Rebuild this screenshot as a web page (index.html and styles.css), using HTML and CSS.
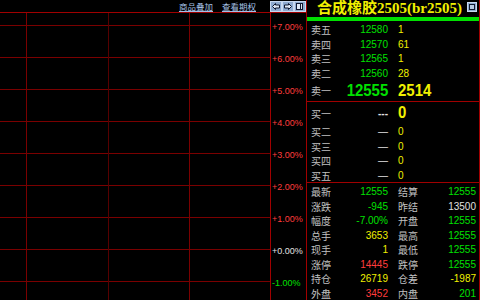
FILE: index.html
```html
<!DOCTYPE html>
<html>
<head>
<meta charset="utf-8">
<link rel="stylesheet" href="styles.css">
</head>
<body>
<div class="app">
  <div class="left">
    <div class="toolbar">
      <a class="link">商品叠加</a>
      <a class="link">查看期权</a>
      <svg class="btns" width="36" height="11" viewBox="0 0 36 11">
        <rect x="0.5" y="0.5" width="11" height="10" fill="#8eaad0" stroke="#c8d8f0"/>
        <path d="M2.5 5.5 L5.5 2.5 L5.5 4 L9.5 4 L9.5 7 L5.5 7 L5.5 8.5 Z" fill="#dfe8f6" stroke="#101830" stroke-width="1"/>
        <rect x="12.5" y="0.5" width="11" height="10" fill="#8eaad0" stroke="#c8d8f0"/>
        <path d="M21.5 5.5 L18.5 2.5 L18.5 4 L14.5 4 L14.5 7 L18.5 7 L18.5 8.5 Z" fill="#dfe8f6" stroke="#101830" stroke-width="1"/>
        <rect x="24.5" y="0.5" width="11" height="10" fill="#8eaad0" stroke="#c8d8f0"/>
        <rect x="26.5" y="2.5" width="6" height="6" fill="#dfe8f6" stroke="#101830"/>
        <line x1="30.5" y1="2" x2="30.5" y2="9" stroke="#101830"/>
      </svg>
    </div>
    <div class="chart">
      <div class="plot"></div>
      <div class="axis">
        <div class="lbl up">+7.00%</div>
        <div class="lbl up">+6.00%</div>
        <div class="lbl up">+5.00%</div>
        <div class="lbl up">+4.00%</div>
        <div class="lbl up">+3.00%</div>
        <div class="lbl up">+2.00%</div>
        <div class="lbl up">+1.00%</div>
        <div class="lbl flat">+0.00%</div>
        <div class="lbl down">-1.00%</div>
      </div>
    </div>
  </div>
  <div class="panel">
    <div class="header">
      <span class="title">合成橡胶2505(br2505)</span>
      <span class="winbox"><span class="winbox-in"></span></span>
    </div>
    <div class="bar"></div>
    <div class="sell">
      <div class="row"><span class="lab">卖五</span><span class="num g">12580</span><span class="vol y">1</span></div>
      <div class="row"><span class="lab">卖四</span><span class="num g">12570</span><span class="vol y">61</span></div>
      <div class="row"><span class="lab">卖三</span><span class="num g">12565</span><span class="vol y">1</span></div>
      <div class="row"><span class="lab">卖二</span><span class="num g">12560</span><span class="vol y">28</span></div>
      <div class="row big"><span class="lab">卖一</span><span class="num g">12555</span><span class="vol y">2514</span></div>
    </div>
    <div class="buy">
      <div class="row big first"><span class="lab">买一</span><span class="num w small">---</span><span class="vol y">0</span></div>
      <div class="row"><span class="lab">买二</span><span class="num w">—</span><span class="vol y">0</span></div>
      <div class="row"><span class="lab">买三</span><span class="num w">—</span><span class="vol y">0</span></div>
      <div class="row"><span class="lab">买四</span><span class="num w">—</span><span class="vol y">0</span></div>
      <div class="row"><span class="lab">买五</span><span class="num w">—</span><span class="vol y">0</span></div>
    </div>
    <div class="stats">
      <div class="row"><span class="lab">最新</span><span class="num g">12555</span><span class="lab2">结算</span><span class="num g">12555</span></div>
      <div class="row"><span class="lab">涨跌</span><span class="num g">-945</span><span class="lab2">昨结</span><span class="num w">13500</span></div>
      <div class="row"><span class="lab">幅度</span><span class="num g">-7.00%</span><span class="lab2">开盘</span><span class="num g">12555</span></div>
      <div class="row"><span class="lab">总手</span><span class="num y">3653</span><span class="lab2">最高</span><span class="num g">12555</span></div>
      <div class="row"><span class="lab">现手</span><span class="num y">1</span><span class="lab2">最低</span><span class="num g">12555</span></div>
      <div class="row"><span class="lab">涨停</span><span class="num r">14445</span><span class="lab2">跌停</span><span class="num g">12555</span></div>
      <div class="row"><span class="lab">持仓</span><span class="num y">26719</span><span class="lab2">仓差</span><span class="num y">-1987</span></div>
      <div class="row"><span class="lab">外盘</span><span class="num r">3452</span><span class="lab2">内盘</span><span class="num g">201</span></div>
    </div>
  </div>
</div>
</body>
</html>
```

FILE: styles.css
```css
* { box-sizing: border-box; margin: 0; padding: 0; }
html, body { background: #000; }
body {
  width: 480px;
  height: 300px;
  overflow: hidden;
  font-family: "Liberation Sans", "Noto Sans CJK SC", sans-serif;
  color: #c0c0c0;
}
.app { display: flex; height: 300px; }

.left { width: 306px; display: flex; flex-direction: column; }
.toolbar {
  height: 13px;
  display: flex;
  align-items: center;
  justify-content: flex-end;
}
.link {
  font-family: "Noto Sans CJK SC", sans-serif;
  font-size: 8.5px;
  line-height: 11px;
  color: #a4c0e6;
  text-decoration: underline;
  margin-right: 9px;
}
.link + .link { margin-right: 14px; }
.btns { display: block; margin-top: 1px; }

.chart { flex: 1; display: flex; border-top: 1px solid #a00000; }
.plot {
  width: 271px;
  border-right: 1px solid #a00000;
  background-image:
    linear-gradient(to right, transparent 26px, #7a0000 26px, #7a0000 27px, transparent 27px, transparent 108px, #560000 108px, #560000 109px, transparent 109px, transparent 189px, #7a0000 189px, #7a0000 190px, transparent 190px),
    linear-gradient(to bottom, transparent 12px, #7a0000 12px, #7a0000 13px, transparent 13px);
  background-size: 100% 100%, 100% 32px;
  background-repeat: no-repeat, repeat-y;
}
.axis { width: 35px; padding-left: 1px; padding-top: 9px; }
.lbl { height: 32px; font-size: 9px; line-height: 10px; }
.up { color: #ff3c3c; }
.flat { color: #e0e0e0; }
.down { color: #00e000; }

.panel {
  width: 174px;
  border-left: 1px solid #a00000;
  border-right: 1px solid #a00000;
  display: flex;
  flex-direction: column;
}
.header {
  height: 17px;
  display: flex;
  align-items: center;
  justify-content: space-between;
  padding-left: 10px;
  padding-right: 2px;
}
.title {
  font-family: "Liberation Serif", "Noto Sans CJK SC", serif;
  font-size: 15px;
  font-weight: bold;
  color: #f0f000;
  line-height: 17px;
}
.winbox {
  width: 10px;
  height: 10px;
  background: #8eaad0;
  border: 1px solid #c8d8f0;
  display: flex;
  align-items: center;
  justify-content: center;
  margin-top: -3px;
}
.winbox-in { width: 6px; height: 6px; border: 1px solid #101830; background: #b8cce6; }
.bar { height: 4px; background: #00e000; }

.sell { padding-top: 1px; border-bottom: 1px solid #a00000; }
.buy { border-bottom: 1px solid #a00000; }
.stats { padding-top: 1px; }

.row {
  display: grid;
  grid-template-columns: 30px 47px 40px 48px;
  align-items: center;
  height: 14.5px;
  padding-left: 4px;
  font-size: 10px;
}
.lab, .lab2 {
  font-family: "Noto Sans CJK SC", sans-serif;
  font-size: 10px;
  color: #c0c0c0;
}
.lab2 { padding-left: 10px; }
.num { text-align: right; }
.vol { padding-left: 10px; }
.row.big { height: 21px; }
.row.big .num, .row.big .vol {
  font-size: 17px;
  font-weight: bold;
  transform: scaleX(0.88);
}
.row.big .num { transform-origin: right center; }
.row.big .vol { transform-origin: 10px center; }
.row.big.first { height: 22px; }
.row.big .num.small { font-size: 10px; transform: none; }

.g { color: #00e000; }
.y { color: #f0f000; }
.r { color: #ff3c3c; }
.w { color: #e0e0e0; }
```
